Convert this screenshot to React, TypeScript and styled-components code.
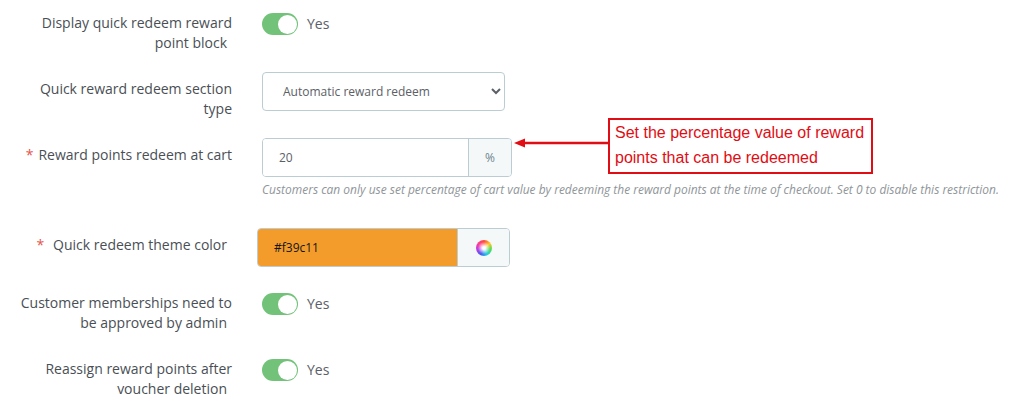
import styled, { createGlobalStyle } from 'styled-components';

const GlobalStyle = createGlobalStyle`
  html, body {
    margin: 0;
    background: #fff;
  }
  body {
    font-family: 'Open Sans', sans-serif;
    font-size: 14px;
    line-height: 20px;
    color: #363a41;
  }
`;

const Form = styled.div`
  position: relative;
  width: 1021px;
  height: 417px;
  overflow: hidden;
  box-sizing: border-box;
  padding-top: 13px;
`;

const Row = styled.div<{ $after: number }>`
  display: grid;
  grid-template-columns: 232px 1fr;
  column-gap: 30px;
  margin-bottom: ${(p) => p.$after}px;
`;

const Label = styled.label<{ $inset?: boolean; $indent?: number }>`
  display: block;
  text-align: right;
  color: #4a4f55;
  padding-left: 16px;
  padding-top: ${(p) => (p.$inset ? 7 : 0)}px;
  padding-right: ${(p) => p.$indent ?? 0}px;
`;

const Required = styled.span<{ $gap: number }>`
  color: #e5534b;
  margin-right: ${(p) => p.$gap}px;
`;

const Trailing = styled.span`
  display: inline-block;
  width: 5px;
`;

const SwitchRow = styled.div`
  display: flex;
  align-items: center;
  gap: 9px;
  height: 22px;
`;

const Track = styled.span`
  display: flex;
  justify-content: flex-end;
  align-items: center;
  box-sizing: border-box;
  width: 36px;
  height: 22px;
  padding-right: 1px;
  border-radius: 11px;
  background: #72c279;
`;

const Knob = styled.span`
  width: 19px;
  height: 19px;
  border-radius: 50%;
  background: #fff;
`;

const YesText = styled.span`
  color: #5b6067;
  font-size: 14px;
`;

const Select = styled.select`
  display: block;
  box-sizing: border-box;
  width: 243px;
  height: 39px;
  padding: 0 0 0 16px;
  border: 1px solid #bbcdd2;
  border-radius: 4px;
  background: #fff;
  color: #5b6067;
  font-family: 'Open Sans', sans-serif;
  font-size: 12px;
  outline: none;
`;

const InputGroup = styled.div<{ $width: number; $shift?: number }>`
  display: flex;
  box-sizing: border-box;
  width: ${(p) => p.$width}px;
  height: 39px;
  margin-left: ${(p) => p.$shift ?? 0}px;
  border: 1px solid #bbcdd2;
  border-radius: 4px;
  overflow: hidden;
`;

const ValueField = styled.div<{ $swatch?: string }>`
  flex: 1;
  display: flex;
  align-items: center;
  padding-left: 16px;
  font-size: 12px;
  color: ${(p) => (p.$swatch ? '#141414' : '#5b6067')};
  background: ${(p) => p.$swatch ?? '#fff'};
`;

const Addon = styled.div<{ $width: number }>`
  display: flex;
  align-items: center;
  justify-content: center;
  box-sizing: border-box;
  width: ${(p) => p.$width}px;
  border-left: 1px solid #bbcdd2;
  background: #f5f8f9;
  color: #6c868e;
  font-size: 12px;
`;

const Wheel = styled.span`
  width: 16px;
  height: 16px;
  border-radius: 50%;
  background:
    radial-gradient(circle, #fff 0 12%, rgba(255, 255, 255, 0) 55%),
    conic-gradient(#ff4a3d, #ffc928, #4fdc58, #25cfe0, #3f5ff0, #b93de8, #ff3d92, #ff4a3d);
`;

const Help = styled.p`
  margin: 4px 0 0;
  font-size: 11.97px;
  line-height: 18px;
  font-style: italic;
  color: #8f9599;
  white-space: nowrap;
`;

const Callout = styled.div`
  position: absolute;
  left: 608px;
  top: 118px;
  box-sizing: border-box;
  width: 265px;
  height: 56px;
  padding: 0 0 0 5px;
  border: 2px solid #e10d14;
  font-family: 'Liberation Sans', Arial, sans-serif;
  font-size: 16px;
  line-height: 25px;
  color: #e10d14;
  background: #fff;
`;

const Arrow = styled.svg`
  position: absolute;
  left: 513px;
  top: 137px;
`;

export default function App() {
  return (
    <Form>
      <GlobalStyle />
      <Row $after={19}>
        <Label>
          Display quick redeem reward point block<Trailing />
        </Label>
        <SwitchRow>
          <Track>
            <Knob />
          </Track>
          <YesText>Yes</YesText>
        </SwitchRow>
      </Row>
      <Row $after={19}>
        <Label $inset>Quick reward redeem section type</Label>
        <Select defaultValue="auto">
          <option value="auto">Automatic reward redeem</option>
        </Select>
      </Row>
      <Row $after={29}>
        <Label $inset>
          <Required $gap={5}>*</Required>
          Reward points redeem at cart
        </Label>
        <div>
          <InputGroup $width={250}>
            <ValueField>20</ValueField>
            <Addon $width={43}>%</Addon>
          </InputGroup>
          <Help>
            Customers can only use set percentage of cart value by redeeming the reward points at
            the time of checkout. Set 0 to disable this restriction.
          </Help>
        </div>
      </Row>
      <Row $after={26}>
        <Label $inset $indent={5}>
          <Required $gap={9}>*</Required>
          Quick redeem theme color
        </Label>
        <InputGroup $width={253} $shift={-5}>
          <ValueField $swatch="#f39c2b">#f39c11</ValueField>
          <Addon $width={52}>
            <Wheel />
          </Addon>
        </InputGroup>
      </Row>
      <Row $after={26}>
        <Label>
          Customer memberships need to be approved by admin<Trailing />
        </Label>
        <SwitchRow>
          <Track>
            <Knob />
          </Track>
          <YesText>Yes</YesText>
        </SwitchRow>
      </Row>
      <Row $after={0}>
        <Label>
          Reassign reward points after voucher deletion<Trailing />
        </Label>
        <SwitchRow>
          <Track>
            <Knob />
          </Track>
          <YesText>Yes</YesText>
        </SwitchRow>
      </Row>
      <Arrow width="96" height="12" viewBox="0 0 96 12">
        <path d="M1 6 L12 1.5 L12 4.8 L95 4.8 L95 7.2 L12 7.2 L12 10.5 Z" fill="#e10d14" />
      </Arrow>
      <Callout>
        Set the percentage value of reward
        <br />
        points that can be redeemed
      </Callout>
    </Form>
  );
}
